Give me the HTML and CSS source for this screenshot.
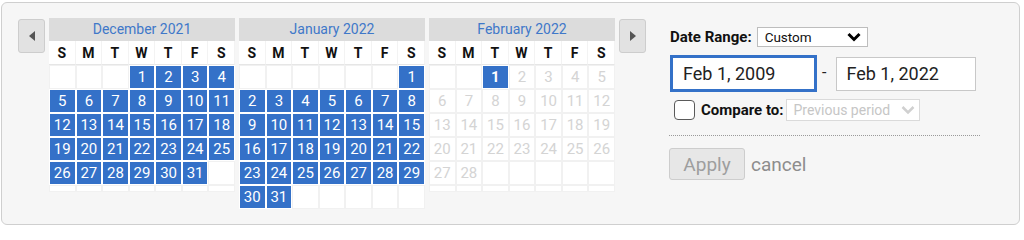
FILE: index.html
```html
<!DOCTYPE html>
<html>
<head>
<meta charset="utf-8">
<link rel="stylesheet" href="styles.css">
</head>
<body>
<div class="panel">
  <div class="nav prev"><span class="tri-left"></span></div>
  <div class="cals">
    <div class="cal">
      <div class="title">December 2021</div>
      <div class="grid">
        <div class="dow">S</div><div class="dow">M</div><div class="dow">T</div><div class="dow">W</div><div class="dow">T</div><div class="dow">F</div><div class="dow">S</div>
        <div class="c"></div><div class="c"></div><div class="c"></div><div class="c s">1</div><div class="c s">2</div><div class="c s">3</div><div class="c s">4</div>
        <div class="c s">5</div><div class="c s">6</div><div class="c s">7</div><div class="c s">8</div><div class="c s">9</div><div class="c s">10</div><div class="c s">11</div>
        <div class="c s">12</div><div class="c s">13</div><div class="c s">14</div><div class="c s">15</div><div class="c s">16</div><div class="c s">17</div><div class="c s">18</div>
        <div class="c s">19</div><div class="c s">20</div><div class="c s">21</div><div class="c s">22</div><div class="c s">23</div><div class="c s">24</div><div class="c s">25</div>
        <div class="c s">26</div><div class="c s">27</div><div class="c s">28</div><div class="c s">29</div><div class="c s">30</div><div class="c s">31</div><div class="c"></div>
        <div class="c short"></div><div class="c short"></div><div class="c short"></div><div class="c short"></div><div class="c short"></div><div class="c short"></div><div class="c short"></div>
      </div>
    </div>
    <div class="cal">
      <div class="title">January 2022</div>
      <div class="grid">
        <div class="dow">S</div><div class="dow">M</div><div class="dow">T</div><div class="dow">W</div><div class="dow">T</div><div class="dow">F</div><div class="dow">S</div>
        <div class="c"></div><div class="c"></div><div class="c"></div><div class="c"></div><div class="c"></div><div class="c"></div><div class="c s">1</div>
        <div class="c s">2</div><div class="c s">3</div><div class="c s">4</div><div class="c s">5</div><div class="c s">6</div><div class="c s">7</div><div class="c s">8</div>
        <div class="c s">9</div><div class="c s">10</div><div class="c s">11</div><div class="c s">12</div><div class="c s">13</div><div class="c s">14</div><div class="c s">15</div>
        <div class="c s">16</div><div class="c s">17</div><div class="c s">18</div><div class="c s">19</div><div class="c s">20</div><div class="c s">21</div><div class="c s">22</div>
        <div class="c s">23</div><div class="c s">24</div><div class="c s">25</div><div class="c s">26</div><div class="c s">27</div><div class="c s">28</div><div class="c s">29</div>
        <div class="c s">30</div><div class="c s">31</div><div class="c"></div><div class="c"></div><div class="c"></div><div class="c"></div><div class="c"></div>
      </div>
    </div>
    <div class="cal">
      <div class="title">February 2022</div>
      <div class="grid">
        <div class="dow">S</div><div class="dow">M</div><div class="dow">T</div><div class="dow">W</div><div class="dow">T</div><div class="dow">F</div><div class="dow">S</div>
        <div class="c"></div><div class="c"></div><div class="c s b">1</div><div class="c x">2</div><div class="c x">3</div><div class="c x">4</div><div class="c x">5</div>
        <div class="c x">6</div><div class="c x">7</div><div class="c x">8</div><div class="c x">9</div><div class="c x">10</div><div class="c x">11</div><div class="c x">12</div>
        <div class="c x">13</div><div class="c x">14</div><div class="c x">15</div><div class="c x">16</div><div class="c x">17</div><div class="c x">18</div><div class="c x">19</div>
        <div class="c x">20</div><div class="c x">21</div><div class="c x">22</div><div class="c x">23</div><div class="c x">24</div><div class="c x">25</div><div class="c x">26</div>
        <div class="c x">27</div><div class="c x">28</div><div class="c"></div><div class="c"></div><div class="c"></div><div class="c"></div><div class="c"></div>
        <div class="c short"></div><div class="c short"></div><div class="c short"></div><div class="c short"></div><div class="c short"></div><div class="c short"></div><div class="c short"></div>
      </div>
    </div>
  </div>
  <div class="nav next"><span class="tri-right"></span></div>

  <div class="side">
    <div class="row range">
      <span class="lbl">Date Range:</span>
      <div class="select">
        <span>Custom</span>
        <svg class="chev" width="14" height="10" viewBox="0 0 14 10"><path d="M1.5 2 L7 7.5 L12.5 2" fill="none" stroke="#000" stroke-width="3"/></svg>
      </div>
    </div>
    <div class="row dates">
      <div class="inp active">Feb 1, 2009</div>
      <span class="dash">-</span>
      <div class="inp">Feb 1, 2022</div>
    </div>
    <div class="row compare">
      <span class="cb"></span>
      <span class="lbl lbl2">Compare to:</span>
      <div class="select dis">
        <span>Previous period</span>
        <svg class="chev" width="14" height="10" viewBox="0 0 14 10"><path d="M1.5 2 L7 7.5 L12.5 2" fill="none" stroke="#d0d0d0" stroke-width="2.5"/></svg>
      </div>
    </div>
    <div class="sep"></div>
    <div class="row actions">
      <button class="apply">Apply</button>
      <span class="cancel">cancel</span>
    </div>
  </div>
</div>
</body>
</html>
```

FILE: styles.css
```css
html, body {
  margin: 0;
  padding: 0;
  background: #fff;
  font-family: Roboto, "Liberation Sans", Arial, sans-serif;
}

.panel {
  box-sizing: border-box;
  margin: 2px 0 0 1px;
  width: 1019px;
  height: 223px;
  border: 1px solid #cfcfcf;
  border-radius: 6px;
  background: #f6f6f6;
  padding: 15px 0 0 16px;
  display: flex;
  align-items: flex-start;
}

.nav {
  box-sizing: border-box;
  width: 27px;
  height: 34px;
  margin-top: 1px;
  background: #e2e2e2;
  border: 1px solid #cdcdcd;
  border-radius: 3px;
  display: flex;
  align-items: center;
  justify-content: center;
}
.prev { margin-right: 4px; }
.next { margin-left: 4px; }

.tri-left {
  width: 0; height: 0;
  border-top: 5px solid transparent;
  border-bottom: 5px solid transparent;
  border-right: 6px solid #555;
}
.tri-right {
  width: 0; height: 0;
  border-top: 5px solid transparent;
  border-bottom: 5px solid transparent;
  border-left: 6px solid #555;
}

.cals {
  display: flex;
  gap: 4px;
}

.cal {
  width: 186px;
}

.title {
  height: 23px;
  line-height: 23px;
  background: #dcdcdc;
  color: #3f78c9;
  text-align: center;
  font-size: 14px;
}

.grid {
  display: grid;
  grid-template-columns: repeat(7, 1fr);
  background: #fff;
}

.dow {
  height: 24px;
  line-height: 25px;
  text-align: center;
  font-weight: 700;
  font-size: 14px;
  color: #111;
  border-bottom: 1px solid #e6e6e6;
  box-sizing: border-box;
  border-right: 1px solid #f3f3f3;
}

.c {
  box-sizing: border-box;
  height: 24px;
  border: 1px solid #f1f1f1;
  text-align: center;
  line-height: 22px;
  font-size: 15px;
  color: #ccc;
}
.c.s {
  background: #3471c8;
  border-color: #fff;
  color: #fff;
}
.c.b { font-weight: 700; }
.c.x { color: #d4d4d4; }
.c.short { height: 7px; }

.side {
  margin-left: 24px;
  margin-top: 9px;
  width: 312px;
}

.row {
  display: flex;
  align-items: center;
}

.lbl {
  font-weight: 700;
  font-size: 15px;
  color: #111;
}
.range .lbl { margin-right: 5px; }

.select {
  box-sizing: border-box;
  height: 20px;
  width: 111px;
  border: 1px solid #bdbdbd;
  background: #fff;
  display: flex;
  align-items: center;
  justify-content: space-between;
  padding: 0 6px 0 7px;
  font-size: 13.5px;
  color: #111;
}

.dates {
  margin-top: 8px;
}

.inp {
  box-sizing: border-box;
  background: #fff;
  border: 1px solid #c8c8c8;
  height: 34px;
  width: 140px;
  font-size: 18px;
  color: #222;
  padding-left: 9px;
  line-height: 32px;
}
.inp.active {
  border: 3px solid #3471c8;
  height: 37px;
  width: 147px;
  padding-left: 10px;
  line-height: 31px;
}
.dash {
  font-size: 16px;
  color: #222;
  margin: 0 10px 2px 5px;
}

.compare {
  margin-top: 7px;
}
.cb {
  box-sizing: border-box;
  width: 21px;
  height: 20px;
  border: 1.5px solid #5a5a5a;
  border-radius: 4px;
  background: #fff;
  margin-left: 4px;
  margin-right: 6px;
}
.lbl2 {
  font-size: 15px;
  margin-right: 2px;
}
.select.dis {
  width: 134px;
  height: 22px;
  border-color: #dadada;
  color: #c6c6c6;
  font-size: 14px;
  padding: 0 4px 0 7px;
}

.sep {
  margin-top: 14px;
  height: 0;
  border-top: 1px dotted #9a9a9a;
  width: 311px;
  margin-left: -1px;
}

.actions {
  margin-top: 12px;
  margin-left: -1px;
}
.apply {
  box-sizing: border-box;
  width: 76px;
  height: 32px;
  border: 1px solid #cdcdcd;
  border-radius: 3px;
  background: #e7e7e7;
  color: #9e9e9e;
  font-family: Roboto, "Liberation Sans", Arial, sans-serif;
  font-size: 19px;
  padding: 0;
}
.cancel {
  margin-left: 6px;
  color: #8d8d8d;
  font-size: 19px;
}
```
